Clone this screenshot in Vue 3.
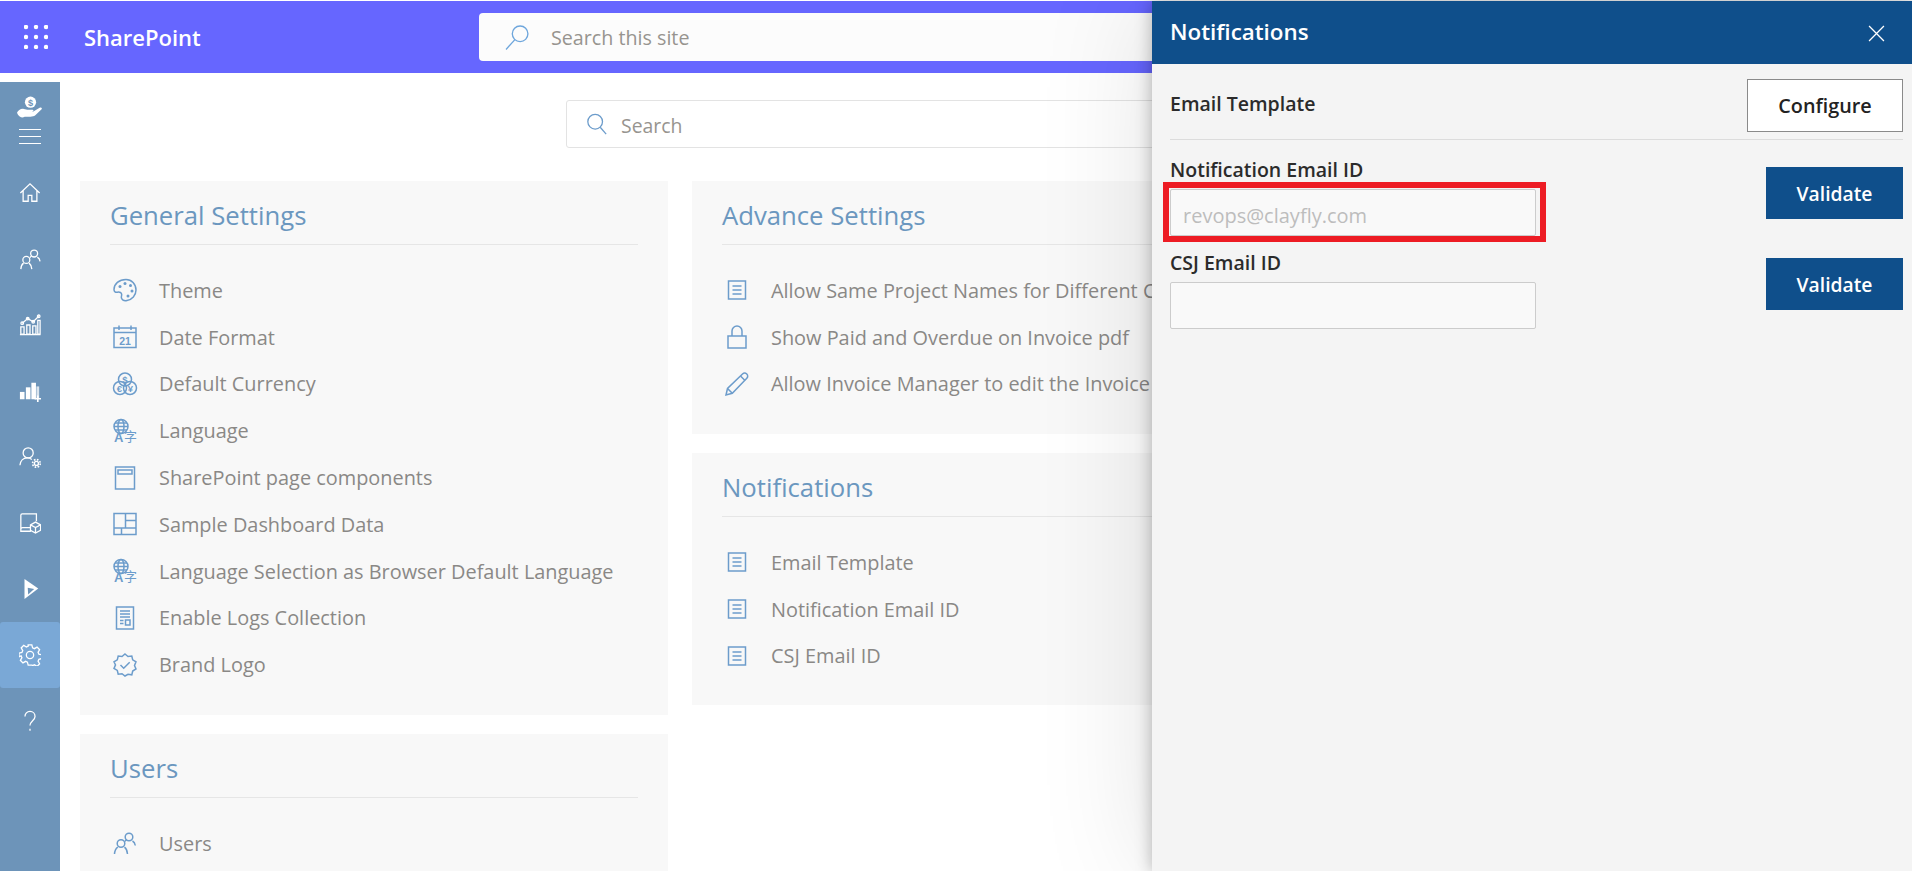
<script setup>
const stroke = 'fill="none" stroke="currentColor" stroke-width="1.5"'
const doc = `<g ${stroke}><rect x="3.5" y="3" width="17" height="18"/><path d="M7.5 8h9M7.5 12h9M7.5 16h9"/></g>`
const globe = `<g ${stroke} stroke-width="1.2"><circle cx="8" cy="7.5" r="7"/><ellipse cx="8" cy="7.5" rx="3" ry="7"/><path d="M1 7.5h14M2 4h12M2 11h12"/></g><text x="1" y="23" font-size="13" font-weight="700" fill="currentColor" font-family="Liberation Sans, sans-serif">A</text><text x="11" y="21.5" font-size="13" fill="currentColor" font-family="Noto Sans CJK SC, sans-serif">字</text>`

const icons = {
  palette: `<g ${stroke}><path d="M13 1.500C6 1.500 1 6 1 11.500c0 2.200 1.500 3 3.300 2.700 2.500-.4 4.400.3 4.400 2.500 0 1.200-.7 2-.2 3.500C9.300 22 11.500 23 14 22.500c5-1 9-5 9-10.500C23 6 18.500 1.500 13 1.500z"/></g><g fill="currentColor"><circle cx="7" cy="8.500" r="1.500"/><circle cx="12" cy="5.500" r="1.500"/><circle cx="17.500" cy="7.500" r="1.500"/><circle cx="19" cy="13" r="1.500"/><circle cx="15" cy="18" r="1.500"/></g>`,
  date: `<g ${stroke}><rect x="1" y="3" width="22" height="19.500"/><path d="M1 7.500h22M6 .5v4.500M18 .5v4.500"/></g><text x="12" y="19.500" text-anchor="middle" font-size="10.500" font-weight="700" fill="currentColor" font-family="Liberation Sans, sans-serif">21</text>`,
  currency: `<g ${stroke}><circle cx="12" cy="7.500" r="6.500"/><circle cx="7" cy="16" r="6.500"/><circle cx="17" cy="16" r="6.500"/></g><g font-size="9.500" font-weight="700" fill="currentColor" text-anchor="middle" font-family="Liberation Sans, sans-serif"><text x="12" y="10.500">$</text><text x="6.500" y="19.500">€</text><text x="17.500" y="19.500">¥</text></g>`,
  language: globe,
  page: `<g ${stroke}><rect x="2.500" y="1" width="19" height="22"/><rect x="5" y="4" width="14" height="4"/></g>`,
  dashboard: `<g ${stroke}><rect x="1" y="1.500" width="22" height="21"/><path d="M12.500 1.500v14.500M12.500 8.500H23M1 16h22M8.500 16v6.500"/></g>`,
  logs: `<g ${stroke}><rect x="3.500" y="1" width="17" height="22"/><path d="M7 5h10M7 8h10M7 11h10M7 14.500h3.500M7 17.500h3.500"/><rect x="12.500" y="14" width="4.500" height="5"/></g>`,
  badge: `<g ${stroke}><path d="M12 1l3 2.500 3.800-.5.900 3.800 3.300 2-1.500 3.700 1.500 3.500-3.300 2-.9 3.800-3.800-.5L12 23l-3-2.300-3.800.5-.9-3.800-3.300-2 1.500-3.500L1 8.800l3.300-2 .9-3.800 3.800.5z"/><path d="M7.500 12l3.200 3.200 6-6"/></g>`,
  users: `<g ${stroke}><circle cx="16" cy="6" r="3.800"/><circle cx="8" cy="12.500" r="3.800"/><path d="M19.500 10c1.800 1 2.500 2.500 2.800 4.500M12 10.500c.4-.8 1-1.500 1.700-1.700M1.500 23c.2-3 1.300-5.500 3.300-6.900M11.500 16.200c1.800 1.400 2.800 3.800 3 6.800"/></g>`,
  doc,
  lock: `<g ${stroke}><rect x="3" y="11" width="18" height="12"/><path d="M7 11V6a5 5 0 0 1 10 0v5"/></g>`,
  pencil: `<g ${stroke}><path d="M1 23l1.500-6.500L17.500 2a3 3 0 0 1 4.300 4.300L7.300 21.300z"/><path d="M15.500 4l4.500 4.500M2.500 16.500l4.800 4.800"/></g>`
}

const navIcons = [
  { name: 'home', svg: `<path d="M1.500 12L12 2l10.500 10M4.500 9.500V21h5.500v-6.500h4V21h5.500V9.500"/>` },
  { name: 'people', svg: `<circle cx="16.500" cy="6" r="3.800"/><circle cx="8" cy="13" r="3.800"/><path d="M20 10c1.800 1 2.700 2.500 3 4.500M12 10.500c.4-.8 1-1.500 1.700-1.800M2 23c.2-3 1.300-5.300 3-6.500M11 16.500c1.800 1.400 2.800 3.500 3 6.500"/>` },
  { name: 'analytics', svg: `<path d="M2 22v-8h3.500v8zM8.500 22v-10H12v10zM15 22V13h3.500v9zM20.500 22V7H23v15zM1 22.500h22.500M3.500 10l6-5 6 3.500 6-6"/><circle cx="3.500" cy="10" r="1.400"/><circle cx="9.500" cy="5" r="1.400"/><circle cx="15.500" cy="8.500" r="1.400"/><circle cx="21.500" cy="2.500" r="1.400"/>` },
  { name: 'bars', svg: `<g fill="currentColor" stroke="none"><rect x="1" y="13" width="5" height="8"/><rect x="7.500" y="8" width="5" height="13"/><rect x="13.500" y="3" width="5" height="18"/></g><rect x="19" y="7" width="3" height="13" fill="currentColor" stroke="none" opacity=".75"/><path d="M20.500 17v7M17 20.500h7" stroke-width="1.800"/>` },
  { name: 'user-gear', svg: `<circle cx="10" cy="7.500" r="5.500"/><path d="M1 21c.4-4.500 3.500-8 8-8 2 0 3.500.5 5 1.700"/><circle cx="19" cy="19" r="2.200" stroke-width="1.500"/><circle cx="19" cy="19" r="4.200" stroke-width="1.800" stroke-dasharray="1.800 1.500"/>` },
  { name: 'app-box', svg: `<path d="M13 21H2V3.500A1.500 1.500 0 0 1 3.500 2H19v8M2 18.500A2 2 0 0 1 4 17h9"/><path d="M18 11l5.500 3v6L18 23l-5.500-3v-6zM12.500 14l5.500 3 5.500-3M18 17v6"/>` },
  { name: 'dynamics', svg: `<path d="M6 1L21 11.500 6 23z" fill="currentColor" stroke="none"/><path d="M9.500 10.500L16.500 12 10 18z" fill="#6d94b9" stroke="none"/>` },
  { name: 'settings', active: true, svg: `<path d="M10 1h4l.8 3.200 2 .9 2.900-1.700 2.800 2.800-1.700 2.900.9 2 3.200.8v4l-3.200.8-.9 2 1.700 2.900-2.800 2.800-2.900-1.700-2 .9L14 23h-4l-.8-3.200-2-.9-2.900 1.700-2.800-2.800 1.700-2.900-.9-2L0 14v-4l3.200-.8.9-2-1.700-2.900 2.800-2.800 2.900 1.700 2-.9z"/><circle cx="12" cy="12" r="4"/>` },
  { name: 'help', svg: `<path d="M6.500 7c0-3 2.300-5.500 5.500-5.500S17.500 4 17.500 7c0 4.500-5.500 5-5.500 10"/><path d="M12 20.500v2"/>` }
]

const leftCards = [
  {
    title: 'General Settings',
    cls: 'card-general',
    items: [
      ['palette', 'Theme'],
      ['date', 'Date Format'],
      ['currency', 'Default Currency'],
      ['language', 'Language'],
      ['page', 'SharePoint page components'],
      ['dashboard', 'Sample Dashboard Data'],
      ['language', 'Language Selection as Browser Default Language'],
      ['logs', 'Enable Logs Collection'],
      ['badge', 'Brand Logo']
    ]
  },
  { title: 'Users', cls: 'card-users', items: [['users', 'Users']] }
]

const rightCards = [
  {
    title: 'Advance Settings',
    cls: 'card-advance',
    items: [
      ['doc', 'Allow Same Project Names for Different Clients'],
      ['lock', 'Show Paid and Overdue on Invoice pdf'],
      ['pencil', 'Allow Invoice Manager to edit the Invoice']
    ]
  },
  {
    title: 'Notifications',
    cls: 'card-notify',
    items: [
      ['doc', 'Email Template'],
      ['doc', 'Notification Email ID'],
      ['doc', 'CSJ Email ID']
    ]
  }
]
</script>

<template>
  <div class="page">
    <header class="topbar">
      <svg class="waffle" viewBox="0 0 24 24" fill="#fff">
        <template v-for="cy in [2, 12, 22]" :key="cy">
          <circle v-for="cx in [2, 12, 22]" :key="cx" :cx="cx" :cy="cy" r="2.200" />
        </template>
      </svg>
      <span class="brand">SharePoint</span>
      <div class="site-search">
        <svg class="site-search-icon" viewBox="0 0 24 24" fill="none" stroke="#6ea6dc" stroke-width="1.300">
          <circle cx="14.500" cy="8.500" r="7.500" />
          <path d="M9.500 14L1 23.500" />
        </svg>
        <span>Search this site</span>
      </div>
    </header>

    <div class="body-row">
      <nav class="sidebar">
        <div class="sidebar-logo">
          <svg class="logo-hand" viewBox="0 0 28 22" fill="#fff">
            <circle cx="14" cy="6" r="5.800" />
            <text x="14" y="9.500" text-anchor="middle" font-size="9.500" font-weight="700" fill="#6d94b9" font-family="Liberation Sans, sans-serif">$</text>
            <path d="M0 17c1-2.500 4-4.500 7-4 2 .3 3 .8 5 .8h4c1.500 0 1.500 2-.5 2h-4.500 5.500l7-4c1.500-.8 3 .3 2 1.500L19 19.500c-1.500 1-3 1.500-5 1.500H8l-2 1c-2.500 0-5-2-6-5z" />
          </svg>
          <div class="hamburger"><i></i><i></i><i></i></div>
        </div>
        <div
          v-for="nav in navIcons"
          :key="nav.name"
          class="nav-item"
          :class="{ active: nav.active }"
        >
          <svg viewBox="0 0 24 24" fill="none" stroke="currentColor" stroke-width="1.400" v-html="nav.svg"></svg>
        </div>
      </nav>

      <main class="content">
        <div class="main-search">
          <svg viewBox="0 0 24 24" fill="none" stroke="#6c9ccb" stroke-width="1.400">
            <circle cx="10" cy="9.500" r="8" />
            <path d="M15.500 15.500L22 23" />
          </svg>
          <span>Search</span>
        </div>

        <div class="card-grid">
          <div class="card-column">
            <section v-for="card in leftCards" :key="card.title" class="card" :class="card.cls">
              <h2>{{ card.title }}</h2>
              <ul>
                <li v-for="item in card.items" :key="item[1]">
                  <svg viewBox="0 0 24 24" v-html="icons[item[0]]"></svg>
                  <span>{{ item[1] }}</span>
                </li>
              </ul>
            </section>
          </div>
          <div class="card-column">
            <section v-for="card in rightCards" :key="card.title" class="card" :class="card.cls">
              <h2>{{ card.title }}</h2>
              <ul>
                <li v-for="item in card.items" :key="item[1]">
                  <svg viewBox="0 0 24 24" v-html="icons[item[0]]"></svg>
                  <span>{{ item[1] }}</span>
                </li>
              </ul>
            </section>
          </div>
        </div>
      </main>
    </div>

    <!-- panel lateral por encima del contenido -->
    <aside class="panel">
      <div class="panel-head">
        <span>Notifications</span>
        <svg viewBox="0 0 16 16" fill="none" stroke="#fff" stroke-width="1.200">
          <path d="M1 1l14 14M15 1L1 15" />
        </svg>
      </div>
      <div class="panel-body">
        <div class="template-row">
          <label>Email Template</label>
          <button class="btn-outline">Configure</button>
        </div>
        <div class="form-row">
          <div class="field">
            <label>Notification Email ID</label>
            <div class="input-wrap">
              <input type="text" placeholder="revops@clayfly.com" />
              <div class="highlight"></div>
            </div>
          </div>
          <button class="btn-primary">Validate</button>
        </div>
        <div class="form-row">
          <div class="field">
            <label>CSJ Email ID</label>
            <div class="input-wrap">
              <input type="text" />
            </div>
          </div>
          <button class="btn-primary">Validate</button>
        </div>
      </div>
    </aside>
  </div>
</template>

<style>
html, body {
  margin: 0;
  background: #fff;
}
</style>

<style scoped>
.page {
  position: relative;
  height: 871px;
  overflow: hidden;
  padding-top: 1px;
  box-sizing: border-box;
  font-family: "Open Sans", "Noto Sans", sans-serif;
  background: #fff;
}

/* ===== TOP BAR ===== */
.topbar {
  height: 72px;
  background: #6666ff;
  display: flex;
  align-items: center;
  padding-left: 24px;
}

.waffle {
  width: 24px;
  height: 24px;
}

.brand {
  margin-left: 36px;
  color: #fff;
  font-size: 22px;
  font-weight: 600;
  width: 395px;
}

.site-search {
  flex: 0 0 1006px;
  height: 48px;
  background: #fcfcfc;
  border-radius: 4px;
  display: flex;
  align-items: center;
  color: #97948f;
  font-size: 19.700px;
}

.site-search-icon {
  width: 25px;
  height: 25px;
  margin-left: 26px;
  margin-right: 21px;
}

/* ===== SIDEBAR ===== */
.body-row {
  display: flex;
  margin-top: 9px;
}

.sidebar {
  width: 60px;
  height: 790px;
  flex: none;
  background: #6d94b9;
  color: #fff;
  display: flex;
  flex-direction: column;
  align-items: center;
}

.sidebar-logo {
  display: flex;
  flex-direction: column;
  align-items: center;
  padding-top: 14px;
  height: 78px;
  box-sizing: border-box;
}

.logo-hand {
  width: 27px;
  height: 22px;
}

.hamburger {
  margin-top: 11px;
  display: flex;
  flex-direction: column;
  gap: 6px;
}

.hamburger i {
  display: block;
  width: 22px;
  height: 1px;
  background: #fff;
}

.nav-item {
  width: 60px;
  height: 66px;
  flex: none;
  display: flex;
  align-items: center;
  justify-content: center;
}

.nav-item svg {
  width: 22px;
  height: 22px;
}

.nav-item.active {
  background: #7aa8d6;
  border-radius: 3px;
}

/* ===== CONTENT ===== */
.content {
  flex: 1;
  padding: 18px 0 0 20px;
  min-width: 0;
}

.main-search {
  width: 1000px;
  height: 48px;
  margin-left: 486px;
  padding-top: 2px;
  border: 1px solid #e3e3e3;
  border-radius: 3px;
  display: flex;
  align-items: center;
  box-sizing: border-box;
  color: #97948f;
  font-size: 19.400px;
}

.main-search svg {
  width: 22px;
  height: 22px;
  margin-left: 19px;
  margin-right: 13px;
  margin-top: -2px;
}

.card-grid {
  display: grid;
  grid-template-columns: 588px 588px;
  column-gap: 24px;
  margin-top: 33px;
}

.card-column {
  display: flex;
  flex-direction: column;
  gap: 19px;
}

.card {
  background: #f8f8f8;
  padding: 0 30px;
}

.card-general { height: 534px; }
.card-users { height: 200px; }
.card-advance { height: 253px; }
.card-notify { height: 252px; }

.card h2 {
  margin: 0;
  height: 64px;
  line-height: 70px;
  font-size: 25.700px;
  font-weight: 400;
  color: #6b97bf;
  border-bottom: 1px solid #e6e6e6;
  box-sizing: border-box;
}

.card ul {
  list-style: none;
  margin: 22px 0 0;
  padding: 0;
}

.card li {
  height: 46.800px;
  display: flex;
  align-items: center;
  font-size: 19.900px;
  color: #8a8886;
  white-space: nowrap;
}

.card li svg {
  width: 24px;
  height: 24px;
  margin-left: 3px;
  margin-right: 22px;
  flex: none;
  color: #6c9ccb;
  overflow: visible;
}

/* ===== PANEL ===== */
.panel {
  position: absolute;
  top: 1px;
  right: 0;
  bottom: 0;
  width: 760px;
  background: #f4f4f4;
  box-shadow: 0 0 16px rgba(0, 0, 0, 0.28), 0 0 110px rgba(0, 0, 0, 0.12);
}

.panel-head {
  height: 63px;
  background: #0f4f8b;
  color: #fff;
  display: flex;
  align-items: center;
  justify-content: space-between;
  padding: 0 27px 2px 18px;
  box-sizing: border-box;
  font-size: 22.400px;
  font-weight: 600;
}

.panel-head svg {
  width: 17px;
  height: 17px;
  margin-top: 3px;
}

.panel-body {
  padding: 15px 9px 0 18px;
}

.template-row {
  display: flex;
  justify-content: space-between;
  align-items: flex-start;
  padding-bottom: 7px;
  border-bottom: 1px solid #dcdcdc;
  margin-bottom: 17px;
}

.template-row label {
  margin-top: 12px;
}

label {
  display: block;
  font-size: 19.500px;
  font-weight: 600;
  color: #2b2b2b;
  line-height: 25px;
  padding-bottom: 7px;
}

.btn-outline {
  width: 156px;
  height: 53px;
  padding-bottom: 2px;
  background: #fff;
  border: 1px solid #8a8a8a;
  font-family: inherit;
  font-size: 19.800px;
  font-weight: 600;
  color: #222;
}

.form-row {
  display: flex;
  justify-content: space-between;
  align-items: flex-start;
  height: 92px;
  margin-bottom: 1px;
}

.form-row + .form-row .btn-primary {
  margin-top: 8px;
}

.field {
  width: 366px;
}

.input-wrap {
  position: relative;
}

input {
  display: block;
  width: 100%;
  height: 47px;
  box-sizing: border-box;
  border: 1px solid #ccc;
  border-radius: 2px;
  background: #f9f9f9;
  padding: 5px 12px 0;
  font-family: inherit;
  font-size: 20px;
}

input::placeholder {
  color: #bdbdbd;
  opacity: 1;
}

/* recuadro rojo de la anotacion */
.highlight {
  position: absolute;
  left: -7px;
  top: -7px;
  width: 383px;
  height: 60px;
  box-sizing: border-box;
  border: 6px solid #ed1c24;
}

.btn-primary {
  width: 137px;
  height: 52px;
  margin-top: 10px;
  padding-top: 2px;
  background: #0f4f8b;
  border: none;
  color: #fff;
  font-family: inherit;
  font-size: 19.300px;
  font-weight: 600;
}
</style>
